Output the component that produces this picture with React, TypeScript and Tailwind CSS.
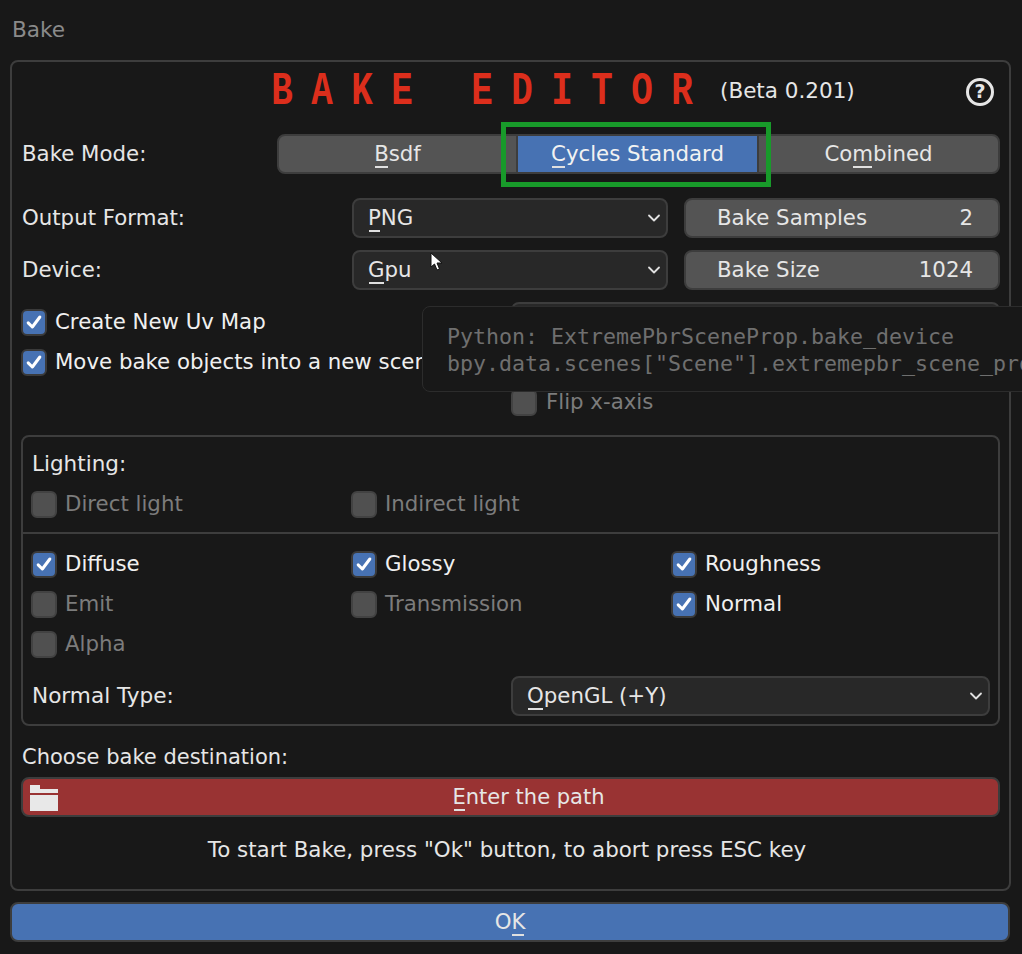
import { ChevronDown } from 'lucide-react';
import type { ReactNode } from 'react';

const titleLetters = ['B', 'A', 'K', 'E', ' ', 'E', 'D', 'I', 'T', 'O', 'R'];

// mnemonic letter, Blender draws a short bar under it
function Mn({ children }: { children: ReactNode }) {
  return (
    <span className="relative">
      {children}
      <span className="absolute left-[1px] right-[1px] bottom-[-2px] h-[2px] bg-[#e0e0e0]" />
    </span>
  );
}

function Check({ label, checked = false, dim = false, wide = false }: { label: string; checked?: boolean; dim?: boolean; wide?: boolean }) {
  return (
    <div className={`flex h-[40px] items-center ${wide ? 'gap-[9px]' : 'gap-[8px]'}`}>
      <div className={`flex h-[27px] w-[26px] items-center justify-center rounded-[6px] border-2 ${checked ? 'border-[#3a3a3a] bg-[#4772b3]' : 'border-[#424242] bg-[#505050]'}`}>
        {checked && (
          <svg viewBox="0 0 24 24" className="h-[20px] w-[20px]" fill="none" stroke="#ffffff" strokeWidth="3.6" strokeLinecap="round" strokeLinejoin="round">
            <path d="M5 13l5 5L19 6" />
          </svg>
        )}
      </div>
      <span className={dim ? 'text-[#7c7c7c]' : 'text-[#f0f0f0]'}>{label}</span>
    </div>
  );
}

function Select({ children, className }: { children?: ReactNode; className: string }) {
  return (
    <div className={`flex h-[40px] items-center justify-between rounded-[8px] border-2 border-[#3d3d3d] bg-[#282828] pl-[14px] pr-[2px] ${className}`}>
      <span>{children}</span>
      <ChevronDown className="h-[20px] w-[20px] text-[#e0e0e0]" strokeWidth={2.2} />
    </div>
  );
}

function NumberField({ label, value }: { label: string; value: string }) {
  return (
    <div className="flex h-[40px] w-[316px] items-center justify-between rounded-[8px] border-2 border-[#3d3d3d] bg-[#545454] pl-[31px] pr-[25px]">
      <span>{label}</span>
      <span>{value}</span>
    </div>
  );
}

export default function App() {
  return (
    <div className="relative h-[954px] w-[1022px] overflow-hidden bg-[#181818] font-['DejaVu_Sans',sans-serif] text-[21.3px] text-[#e6e6e6]">
      <div className="flex h-[60px] items-center pl-[12px] text-[21.6px] text-[#8a8a8a]">Bake</div>

      <div className="ml-[10px] h-[831px] w-[1001px] rounded-[8px] border-2 border-[#3d3d3d] px-[9px]">
        <div className="flex h-[72px] items-center pb-[13px]">
          <div className="ml-[241px] flex font-['Liberation_Mono',monospace] text-[46px] font-bold leading-none text-[#dc2e1c]">
            {titleLetters.map((l, i) => (
              <span key={i} className="flex w-[40px] justify-center scale-x-[0.78]">{l}</span>
            ))}
          </div>
          <span className="ml-[18px] text-[21.5px]">(Beta 0.201)</span>
          <div className="ml-auto mr-[6px] flex h-[28px] w-[28px] items-center justify-center rounded-full border-[3px] border-[#e6e6e6] text-[19px] font-bold leading-none">?</div>
        </div>

        <div className="flex h-[40px] items-center">
          <span className="w-[256px] pl-[1px]">Bake Mode:</span>
          <div className="flex h-[40px] w-[723px] rounded-[8px] border-2 border-[#3d3d3d] bg-[#545454]">
            <div className="flex w-[237px] items-center justify-center"><span><Mn>B</Mn>sdf</span></div>
            <div className="flex w-[243px] items-center justify-center border-x-2 border-[#3d3d3d] bg-[#4772b3] text-[#f2f2f2]"><span><Mn>C</Mn>ycles Standard</span></div>
            <div className="flex flex-1 items-center justify-center"><span>Co<Mn>m</Mn>bined</span></div>
          </div>
        </div>

        <div className="mt-[24px] flex items-center">
          <span className="w-[331px] pl-[1px]">Output Format:</span>
          <Select className="w-[316px]"><Mn>P</Mn>NG</Select>
          <div className="ml-[16px]"><NumberField label="Bake Samples" value="2" /></div>
        </div>
        <div className="mt-[12px] flex items-center">
          <span className="w-[331px] pl-[1px]">Device:</span>
          <Select className="w-[316px]"><Mn>G</Mn>pu</Select>
          <div className="ml-[16px]"><NumberField label="Bake Size" value="1024" /></div>
        </div>

        <div className="mt-[12px] flex h-[120px]">
          <div className="w-[490px]">
            <Check label="Create New Uv Map" checked />
            <Check label="Move bake objects into a new scene" checked />
          </div>
          <div className="w-[488px]">
            <Select className="w-[489px]" />
            <div className="mt-[40px]">
              <Check label="Flip x-axis" dim wide />
            </div>
          </div>
        </div>

        <div className="mt-[13px] h-[291px] w-[979px] rounded-[8px] border-2 border-[#3d3d3d]">
          <div className="mt-[7px] flex h-[40px] items-center pl-[9px] text-[21.5px]">Lighting:</div>
          <div className="grid grid-cols-[320px_320px_1fr] border-b-2 border-[#3d3d3d] pb-[8px] pl-[8px]">
            <Check label="Direct light" dim />
            <Check label="Indirect light" dim />
          </div>
          <div className="grid grid-cols-[320px_320px_1fr] pl-[8px] pt-[10px]">
            <Check label="Diffuse" checked />
            <Check label="Glossy" checked />
            <Check label="Roughness" checked />
            <Check label="Emit" dim />
            <Check label="Transmission" dim />
            <Check label="Normal" checked />
            <Check label="Alpha" dim />
          </div>
          <div className="mt-[12px] flex items-center pl-[9px]">
            <span className="w-[479px] text-[21.6px]">Normal Type:</span>
            <Select className="w-[479px]"><Mn>O</Mn>penGL (+Y)</Select>
          </div>
        </div>

        <div className="mt-[10px] flex h-[41px] items-center pl-[1px] pt-[3px] text-[21px]">Choose bake destination:</div>
        <div className="relative flex h-[40px] w-[979px] items-center justify-center rounded-[8px] border-2 border-[#3d3d3d] bg-[#993333] pl-[36px] pt-[2px] text-[21px]">
          <svg viewBox="0 0 28 26" className="absolute left-[7px] top-[6px] h-[26px] w-[28px]" fill="#e8e8e8">
            <path d="M0 0h10v4h18v4H0zM0 10h28v16H0z" />
          </svg>
          <span><Mn>E</Mn>nter the path</span>
        </div>
        <div className="mt-[11px] flex h-[41px] items-center justify-center pr-[7px] pt-[3px] text-[21.4px]">To start Bake, press "Ok" button, to abort press ESC key</div>
      </div>

      <div className="ml-[10px] mt-[11px] flex h-[40px] w-[1000px] items-center justify-center rounded-[8px] border-2 border-[#3d3d3d] bg-[#4772b3]">
        <span>O<Mn>K</Mn></span>
      </div>

      {/* overlays */}
      <div className="absolute left-[501px] top-[122px] h-[65px] w-[270px] border-[5px] border-[#189a2a]" />
      <svg viewBox="0 0 14 20" className="absolute left-[430px] top-[252px] h-[20px] w-[14px]" fill="#ffffff" stroke="#111111" strokeWidth="1">
        <path d="M1 1v14l3.5-3 2.5 6 2.5-1-2.5-6h5z" />
      </svg>
      <div className="absolute left-[422px] top-[306px] h-[86px] w-[640px] rounded-[8px] border border-[#2c2c2c] bg-[#181818] pl-[24px] pt-[16px] font-['DejaVu_Sans_Mono',monospace] text-[21.6px] leading-[27px] text-[#6f6f6f] whitespace-nowrap">
        <div>Python: ExtremePbrSceneProp.bake_device</div>
        <div>bpy.data.scenes["Scene"].extremepbr_scene_prop</div>
      </div>
    </div>
  );
}
